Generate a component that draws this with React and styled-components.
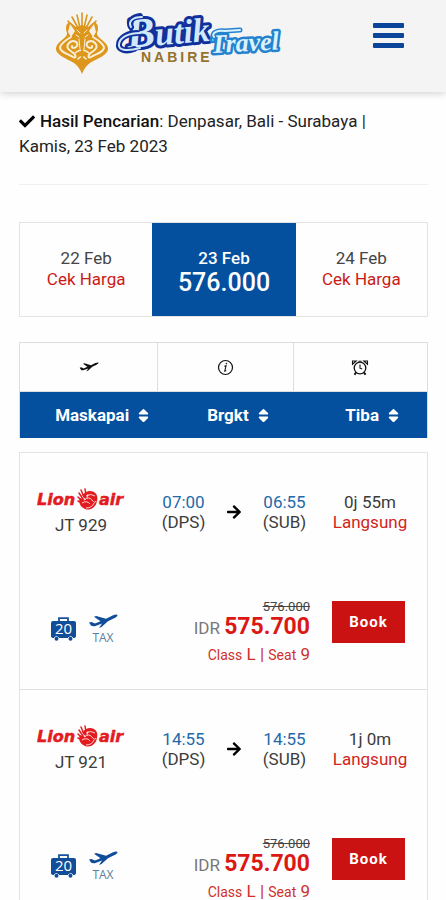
import React from 'react';
import styled, { createGlobalStyle } from 'styled-components';
import { FaArrowRight, FaCheck, FaSort } from 'react-icons/fa';

const GlobalStyle = createGlobalStyle`
  * {
    box-sizing: border-box;
  }

  body {
    margin: 0;
    background: #fefefe;
    color: #3c3c3c;
    font-family: Roboto, 'Liberation Sans', sans-serif;
    font-size: 17px;
    line-height: 20px;
  }

  button {
    border: 0;
    padding: 0;
    background: none;
    color: inherit;
    font: inherit;
    cursor: pointer;
  }

  a {
    color: inherit;
    text-decoration: none;
  }

  svg {
    display: block;
  }
`;

const Header = styled.header`
  display: flex;
  justify-content: space-between;
  align-items: flex-start;
  height: 92px;
  padding: 8px 42px 0 54px;
  background: #f4f4f4;
  box-shadow: 0 1px 8px rgba(0, 0, 0, 0.2);
`;

const MenuButton = styled.button`
  margin-top: 15px;
`;

const Main = styled.main`
  padding: 17px 18px 0 19px;
`;

const Summary = styled.p`
  display: flex;
  align-items: flex-start;
  flex-wrap: wrap;
  column-gap: 5px;
  margin: 0 0 25px;
  color: #222;
  line-height: 25px;

  svg {
    width: 16px;
    height: 25px;
    color: #000;
  }

  strong {
    color: #111;
    font-weight: 500;
  }
`;

const TravelDate = styled.span`
  flex-basis: 100%;
`;

const Divider = styled.hr`
  margin: 0 0 37px;
  border: 0;
  border-top: 1px solid #f0f0f0;
`;

const Dates = styled.nav`
  display: grid;
  grid-template-columns: 133fr 144fr 132fr;
  height: 95px;
  margin-bottom: 25px;
  border: 1px solid #e4e4e4;
`;

const DateLink = styled.a`
  display: flex;
  flex-direction: column;
  align-items: center;
  padding-top: 25px;
  color: ${({ $active }) => ($active ? '#fff' : '#444')};
  background: ${({ $active }) => ($active ? '#04509f' : 'transparent')};
  font-weight: ${({ $active }) => ($active ? 500 : 400)};
`;

const DatePrice = styled.span`
  color: ${({ $active }) => ($active ? '#fff' : '#cb1a16')};
  font-size: ${({ $active }) => ($active ? '25px' : '17px')};
  line-height: ${({ $active }) => ($active ? '29px' : '22px')};
`;

const Tabs = styled.div`
  display: grid;
  grid-template-columns: 138fr 136fr 135fr;
  height: 50px;
  border: 1px solid #dedede;
`;

const Tab = styled.button`
  display: flex;
  align-items: center;
  justify-content: center;
  color: #111;

  & + & {
    border-left: 1px solid #dedede;
  }
`;

const SortBar = styled.div`
  display: grid;
  grid-template-columns: 163fr 110fr 136fr;
  height: 46px;
  margin-bottom: 14px;
  border: solid #dedede;
  border-width: 0 1px;
  background: #04509f;
  color: #fff;
`;

const SortButton = styled.button`
  display: flex;
  align-items: center;
  justify-content: flex-end;
  gap: 6px;
  padding-right: ${({ $last }) => ($last ? '25px' : '30px')};
  font-weight: 700;

  &:nth-child(2) {
    padding-right: 20px;
  }
`;

const Flights = styled.ul`
  margin: 0;
  padding: 0;
  list-style: none;
  border: 1px solid #e4e4e4;
`;

const Flight = styled.li`
  height: 237px;
  padding: 35px 13px 0 0;
  border-bottom: 1px solid #e0e0e0;
`;

const Route = styled.div`
  display: grid;
  grid-template-columns: 122fr 83fr 18fr 83fr 88fr;
  height: 104px;
`;

const Airline = styled.div`
  display: flex;
  flex-direction: column;
  align-items: center;
  gap: 3px;
`;

const Stop = styled.div`
  display: flex;
  flex-direction: column;
  align-items: center;
  padding-top: 4px;
  white-space: nowrap;
`;

const Time = styled.time`
  color: #2369aa;
`;

const Direct = styled.span`
  color: #d02520;
`;

const Arrow = styled.div`
  display: flex;
  justify-content: center;
  padding-top: 16px;
  color: #000;
`;

const Offer = styled.div`
  display: flex;
  align-items: flex-start;
  justify-content: flex-end;
  padding: 9px 9px 0 31px;
`;

const Perks = styled.div`
  display: flex;
  gap: 12px;
  margin-right: auto;
  padding-top: 13px;
`;

const Baggage = styled.div`
  padding-top: 3px;
`;

const Tax = styled.div`
  display: flex;
  flex-direction: column;
  align-items: center;
  color: #5a80a0;
  font-family: 'Open Sans', sans-serif;
  font-size: 12px;
  line-height: 18px;

  svg {
    color: #124d99;
  }
`;

const Price = styled.div`
  display: flex;
  flex-direction: column;
  align-items: flex-end;
  margin-right: 22px;
  white-space: nowrap;
`;

const OldPrice = styled.s`
  color: #444;
  font-size: 13px;
  line-height: 12px;
`;

const NewPrice = styled.div`
  color: #777;
  line-height: 28px;

  strong {
    color: #dc1814;
    font-size: 23px;
    font-weight: 700;
  }
`;

const Seats = styled.div`
  color: #cf302c;
  line-height: 25px;

  small {
    font-size: 14px;
  }
`;

const BookButton = styled.button`
  width: 73px;
  height: 42px;
  background: #cb1212;
  color: #fff;
  font-size: 15px;
  font-weight: 700;
  letter-spacing: 1px;
`;

const Logo = () => (
  <svg width="228" height="70" viewBox="0 0 228 70" role="img" aria-label="Butik Travel Nabire">
    <g fill="none" stroke="#dd971c" strokeLinecap="round" strokeLinejoin="round">
      <path strokeWidth="1.6" d="M28 20V5M26 20L23 7M30 20L33 7M24 20L18 9M32 20L38 9M21 21L14 13M35 21L42 13" />
      <path
        fill="#dd971c"
        stroke="none"
        d="M16 14C12 15 11 20 13 25C14 30 3 33 2 40C1 47 14 51 20 55C24 58 26 61 28 66C30 61 32 58 36 55C42 51 55 47 54 40C53 33 42 30 43 25C45 20 44 15 40 14L34 19L28 17L22 19Z"
      />
      <path fill="#f6f0e4" stroke="none" d="M16 16L21 23L17 29L14 24ZM40 16L35 23L39 29L42 24Z" />
      <g stroke="#f9efd9" strokeWidth="2">
        <path d="M17 29C12 32 6 36 6 40C7 45 15 46 19 49C22 51 23 47 18 44C13 41 12 38 15 35C19 31 25 34 23 38C21 41 17 40 18 38" />
        <path d="M39 29C44 32 50 36 50 40C49 45 41 46 37 49C34 51 33 47 38 44C43 41 44 38 41 35C37 31 31 34 33 38C35 41 39 40 38 38" />
        <path strokeWidth="1.5" d="M21 45Q28 39 35 45M24 51Q28 46 32 51" />
        <path strokeWidth="1" d="M23 22L26 25M33 22L30 25M22 27L25 29M34 27L31 29M25 31L26 41M31 31L30 41" />
      </g>
      <path strokeWidth="2" d="M28 18V62" />
    </g>
    <g
      fontFamily="'Liberation Serif', serif"
      fontStyle="italic"
      fontWeight="700"
      strokeLinejoin="round"
      paintOrder="stroke"
    >
      <text x="74" y="40" fontSize="42" fill="#cfe9fa" stroke="#12309c" strokeWidth="6" transform="rotate(-5 74 40)">
        B<tspan fontSize="34">utik</tspan>
      </text>
      <path
        d="M80 41C72 44 64 42 65 36C66 29 75 25 83 25M77 19C74 14 78 9 86 8"
        fill="none"
        stroke="#12309c"
        strokeWidth="6"
        strokeLinecap="round"
      />
      <path
        d="M86 40C72 44 64 42 65 36C66 29 75 25 86 25M77 19C74 14 78 9 88 9"
        fill="none"
        stroke="#cfe9fa"
        strokeWidth="2"
        strokeLinecap="round"
      />
      <text x="157" y="45" fontSize="26" fill="#dbf3fd" stroke="#2582ce" strokeWidth="5" transform="rotate(-3 157 45)">
        Travel
      </text>
      <path d="M160 29C157 25 163 22 171 23L186 22" fill="none" stroke="#2582ce" strokeWidth="5" strokeLinecap="round" />
      <path d="M160 29C157 25 163 22 171 23L186 22" fill="none" stroke="#dbf3fd" strokeWidth="2" strokeLinecap="round" />
    </g>
    <text
      x="87"
      y="54"
      fill="#95722c"
      fontFamily="'Liberation Sans', sans-serif"
      fontSize="14"
      fontWeight="700"
      letterSpacing="3"
    >
      NABIRE
    </text>
  </svg>
);

const PlaneIcon = ({ width, height }) => (
  <svg width={width} height={height} viewBox="0 0 30 15" fill="currentColor" aria-hidden="true">
    <path d="M1 8.5L3.5 8L7 9.6L12.5 7.2L6 2.8L8.2 2L18 4.8L24.5 1.6Q29 -0.2 29.5 1.2Q29.5 2.5 25.5 4.6L20 7.2L13.5 13L11 14L14 9.6L7.5 12Q4.5 12.8 3 11.5Z" />
  </svg>
);

const InfoIcon = () => (
  <svg width="17" height="17" viewBox="0 0 17 17" fill="none" stroke="currentColor" aria-hidden="true">
    <circle cx="8.5" cy="8.5" r="7" strokeWidth="1.2" />
    <path strokeWidth="1.1" d="M7.3 7.3L9 6.8L7.8 12L9.2 11.4" />
    <circle cx="9.4" cy="4.6" r="0.8" fill="currentColor" stroke="none" />
  </svg>
);

const AlarmIcon = () => (
  <svg width="18" height="17" viewBox="0 0 18 17" fill="none" stroke="currentColor" aria-hidden="true">
    <circle cx="9" cy="9" r="5.8" strokeWidth="1.3" />
    <path strokeWidth="1.1" d="M9 5.5V9.2L11.2 10M1.5 5.2V2H5.2ZM16.5 5.2V2H12.8ZM7.5 2.2H10.5" />
    <path strokeWidth="2" d="M5 13.5L3.5 15.8M13 13.5L14.5 15.8" />
  </svg>
);

const SuitcaseIcon = ({ weight }) => (
  <svg width="25" height="24" viewBox="0 0 25 24" role="img" aria-label={`${weight} kg`}>
    <path d="M8 4V1.2H17V4" fill="none" stroke="#17539a" strokeWidth="1.8" />
    <path d="M2 4H23Q25 4 25 6V19Q25 21 22 21H3Q0 21 0 19V6Q0 4 2 4Z" fill="#124d99" />
    <path d="M3 21Q5 18 8 21M17 21Q20 18 22 21" fill="#fff" stroke="#fff" />
    <circle cx="5.5" cy="21.8" r="2" fill="#124d99" />
    <circle cx="19.5" cy="21.8" r="2" fill="#124d99" />
    <text x="12.5" y="17" textAnchor="middle" fill="#fff" fontFamily="'Open Sans', sans-serif" fontSize="15">
      {weight}
    </text>
  </svg>
);

const LionAirLogo = () => (
  <svg width="88" height="24" viewBox="0 0 88 24" role="img" aria-label="Lion air">
    <g
      fill="#e31b1f"
      stroke="#e31b1f"
      strokeWidth="0.5"
      fontFamily="'DejaVu Sans', sans-serif"
      fontSize="16"
      fontStyle="italic"
      fontWeight="700"
    >
      <text x="0" y="17">Lion</text>
      <text x="62" y="17">air</text>
    </g>
    <path
      fill="#e31b1f"
      d="M49 4C56 1 62 6 60 13C59 19 54 23 48 21C43 19 41 14 43 10L49 12L45 7Z"
    />
    <path
      fill="none"
      stroke="#e31b1f"
      strokeWidth="1.5"
      strokeLinecap="round"
      d="M46 11L42 5M47 9L44 2M49 7L48 1M45 13L41 9M45 15L41 13"
    />
    <path
      fill="none"
      stroke="#fff"
      strokeWidth="0.8"
      d="M49 8Q54 5 58 8M47 12Q52 8 55 12T59 13M45 15Q50 12 53 16M49 20Q55 20 57 15M51 6L50 10"
    />
  </svg>
);

const dates = [
  { day: '22 Feb', price: 'Cek Harga' },
  { day: '23 Feb', price: '576.000', active: true },
  { day: '24 Feb', price: 'Cek Harga' },
];

const flights = [
  { code: 'JT 929', depart: '07:00', arrive: '06:55', duration: '0j 55m' },
  { code: 'JT 921', depart: '14:55', arrive: '14:55', duration: '1j 0m' },
];

const FlightItem = ({ flight }) => (
  <Flight>
    <Route>
      <Airline>
        <LionAirLogo />
        <span>{flight.code}</span>
      </Airline>
      <Stop>
        <Time>{flight.depart}</Time>
        <span>(DPS)</span>
      </Stop>
      <Arrow>
        <FaArrowRight size={16} />
      </Arrow>
      <Stop>
        <Time>{flight.arrive}</Time>
        <span>(SUB)</span>
      </Stop>
      <Stop>
        <span>{flight.duration}</span>
        <Direct>Langsung</Direct>
      </Stop>
    </Route>
    <Offer>
      <Perks>
        <Baggage>
          <SuitcaseIcon weight="20" />
        </Baggage>
        <Tax>
          <PlaneIcon width="30" height="15" />
          TAX
        </Tax>
      </Perks>
      <Price>
        <OldPrice>576.000</OldPrice>
        <NewPrice>
          IDR <strong>575.700</strong>
        </NewPrice>
        <Seats>
          <small>Class</small> L | <small>Seat</small> 9
        </Seats>
      </Price>
      <BookButton type="button">Book</BookButton>
    </Offer>
  </Flight>
);

export default () => (
  <>
    <GlobalStyle />
    <Header>
      <a href="#home">
        <Logo />
      </a>
      <MenuButton type="button" aria-label="Menu">
        <svg width="31" height="26" viewBox="0 0 31 26" fill="#0a459a">
          <rect width="31" height="5" rx="1" />
          <rect y="10" width="31" height="5" rx="1" />
          <rect y="20" width="31" height="5" rx="1" />
        </svg>
      </MenuButton>
    </Header>
    <Main>
      <Summary>
        <FaCheck />
        <span>
          <strong>Hasil Pencarian</strong>: Denpasar, Bali - Surabaya |
        </span>
        <TravelDate>Kamis, 23 Feb 2023</TravelDate>
      </Summary>
      <Divider />
      <Dates>
        {dates.map(({ day, price, active }) => (
          <DateLink key={day} href="#date" $active={active}>
            {day}
            <DatePrice $active={active}>{price}</DatePrice>
          </DateLink>
        ))}
      </Dates>
      <Tabs>
        <Tab type="button" aria-label="Maskapai">
          <PlaneIcon width="20" height="10" />
        </Tab>
        <Tab type="button" aria-label="Info">
          <InfoIcon />
        </Tab>
        <Tab type="button" aria-label="Waktu">
          <AlarmIcon />
        </Tab>
      </Tabs>
      <SortBar>
        <SortButton type="button">
          Maskapai <FaSort size={17} />
        </SortButton>
        <SortButton type="button">
          Brgkt <FaSort size={17} />
        </SortButton>
        <SortButton type="button" $last>
          Tiba <FaSort size={17} />
        </SortButton>
      </SortBar>
      <Flights>
        {flights.map(flight => (
          <FlightItem key={flight.code} flight={flight} />
        ))}
      </Flights>
    </Main>
  </>
);
